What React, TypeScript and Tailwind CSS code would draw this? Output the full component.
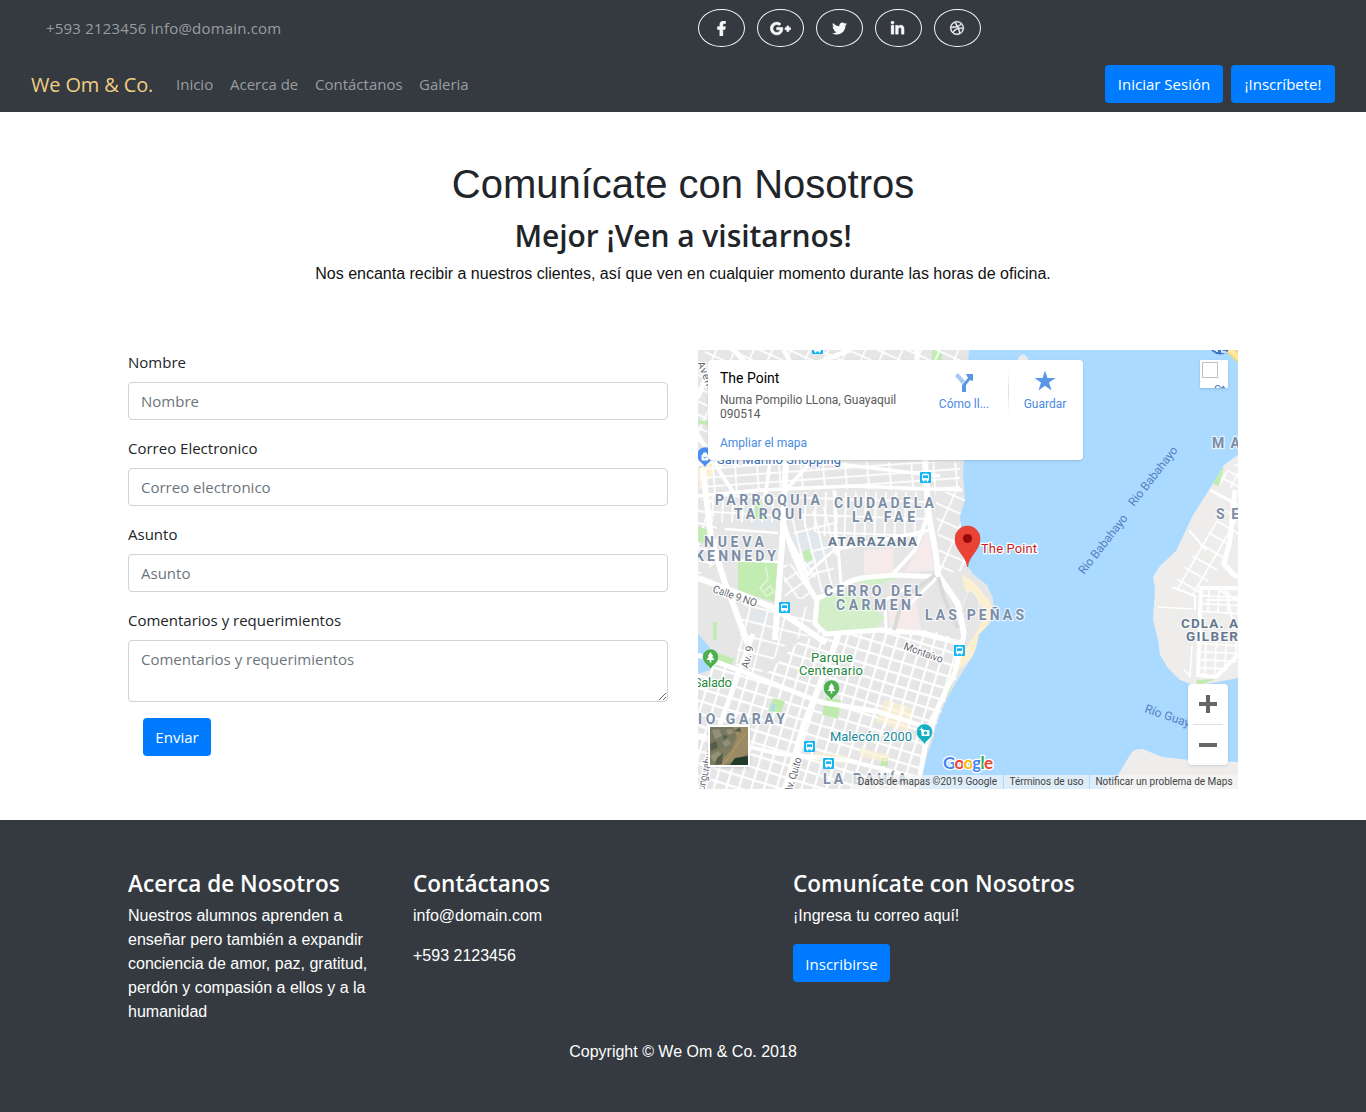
import React from "react";
import { FaFacebookF, FaGooglePlusG, FaTwitter, FaLinkedinIn, FaDribbble } from "react-icons/fa";

const navLinks = [
  { label: "Inicio", w: "w-[38px]" },
  { label: "Acerca de", w: "w-[69px]" },
  { label: "Contáctanos", w: "w-[88px]" },
  { label: "Galeria", w: "w-[49px]" },
];

const socials = [
  { name: "Facebook", icon: <FaFacebookF size={15} stroke="currentColor" strokeWidth={20} /> },
  { name: "Google Plus", icon: <FaGooglePlusG size={21} stroke="currentColor" strokeWidth={22} /> },
  { name: "Twitter", icon: <FaTwitter size={15} /> },
  { name: "LinkedIn", icon: <FaLinkedinIn size={15} stroke="currentColor" strokeWidth={14} className="mt-px -ml-px" /> },
  { name: "Dribbble", icon: <FaDribbble size={14} stroke="currentColor" strokeWidth={14} className="overflow-visible" /> },
];

const ui = "font-['Open_Sans',sans-serif]";

function Button({ children, className }: { children: React.ReactNode; className: string }) {
  return (
    <button
      className={`flex h-[38px] shrink-0 items-center justify-center whitespace-nowrap rounded bg-[#007bff] pt-px font-['Open_Sans',sans-serif] text-[15px] text-white ${className}`}
    >
      {children}
    </button>
  );
}

function Header() {
  return (
    <header className={`h-28 bg-[#343a40] text-[#9a9da0] ${ui}`}>
      <div className="flex h-14 items-center text-[15px]">
        <p className="w-[698px] pl-[46px] tracking-[0.19px]">+593 2123456 info@domain.com</p>
        <div className="flex gap-[12.5px]">
          {socials.map((s) => (
            <a
              key={s.name}
              aria-label={s.name}
              className="flex h-[38px] w-[46.5px] items-center justify-center rounded-[50%] border border-[#f8f9fa] text-[#f8f9fa]"
            >
              {s.icon}
            </a>
          ))}
        </div>
      </div>
      <nav className="flex h-14 items-center px-[31px]">
        <a className="w-[130px] pt-[2px] text-[20px] leading-6 tracking-[-0.15px] whitespace-nowrap text-[#f0cd82]">We Om &amp; Co.</a>
        <div className="ml-[15px] flex gap-4 text-[15px]">
          {navLinks.map((l) => (
            <a key={l.label} className={`whitespace-nowrap ${l.w}`}>
              {l.label}
            </a>
          ))}
        </div>
        <div className="ml-auto flex gap-2">
          <Button className="w-[118px]">Iniciar Sesión</Button>
          <Button className="w-[104px]">¡Inscríbete!</Button>
        </div>
      </nav>
    </header>
  );
}

function Field({ label, placeholder }: { label: string; placeholder: string }) {
  return (
    <label className="mb-4 block">
      <span className="mb-2 block h-6 leading-6">{label}</span>
      <input
        placeholder={placeholder}
        className="block h-[38px] w-full rounded border border-[#ced4da] px-3 pb-px placeholder:text-[#6c757d]"
      />
    </label>
  );
}

const WEST =
  "M698 350H969L968 362L965 440L963 475L965 500L960 516L963 548L968 567L973 574L987 585L993 598L994 610L990 624L979 634L976 648L972 657L965 668L955 684L945 702L935 728L934 736L928 752L922 776L918 789H698Z";
const EAST =
  "M1238 455L1224 465L1215 480L1207 493L1193 515L1176 551L1160 566L1153 577L1155 588L1153 620L1158 640L1160 655L1168 668L1180 680L1196 686L1238 678Z";

type Grid = { id: string; w: number; h: number; a: number; area: string; s?: number };
const grids: Grid[] = [
  { id: "g1", w: 12, h: 12, a: 17, s: 4.4, area: "M698 655L760 680L800 640L840 632L930 630L960 640L955 690L930 740L915 789H698Z" },
  { id: "g2", w: 22, h: 9, a: -4, area: "M700 462H960V492L820 488L700 496Z" },
  { id: "g3", w: 10, h: 17, a: 3, area: "M705 495H785V522H710Z" },
  { id: "g4", w: 10, h: 17, a: 2, area: "M800 492H925V535L850 548L800 525Z" },
  { id: "g5", w: 11, h: 22, a: -14, area: "M790 520L840 500L832 590L810 595Z" },
  { id: "g6", w: 17, h: 12, a: 15, area: "M698 500L712 498L722 560L698 575Z" },
  { id: "g7", w: 13, h: 12, a: -35, area: "M783 565L818 560L812 600L785 598Z" },
  { id: "g8", w: 18, h: 14, a: 24, area: "M935 492H966V570L940 575Z" },
  { id: "g9", w: 17, h: 12, a: 24, area: "M698 362L706 350H960V360L800 362L720 470L698 445Z" },
  { id: "g10", w: 18, h: 15, a: 14, area: "M745 600L815 608L840 630L790 640L760 675L735 670Z" },
  { id: "g11", w: 11, h: 9, a: 28, area: "M1240 460L1222 475L1218 485L1240 490Z" },
  { id: "g12", w: 16, h: 14, a: 30, area: "M1224 510L1192 556L1172 588L1195 598L1225 560L1240 530V515Z" },
  { id: "g13", w: 10, h: 8, a: 3, area: "M1200 586H1238V615L1200 612ZM1198 640H1238V660L1218 678H1197Z" },
];

const roads: [string, number][] = [
  ["M698 496L760 490L850 486L962 490", 3.5],
  ["M703 470L711 538L724 580L748 644", 6],
  ["M786 460L784 500L783 530L778 600L775 640", 6],
  ["M784 525C794 560 805 583 817 600L815 624L826 634L880 630L920 633L963 644", 5],
  ["M698 578L740 594L776 609L800 625L826 643", 6],
  ["M817 598C835 594 845 578 870 577L893 575L938 577", 5],
  ["M925 460L928 510L936 555L938 575L958 604L964 635", 6],
  ["M928 515L915 550L893 574", 4],
  ["M785 531L808 575", 4],
  ["M808 573L834 550L930 530", 3],
  ["M838 546L841 584M834 490L837 555", 3],
  ["M698 655L744 672L820 702L880 712L934 730", 5],
  ["M698 735L780 754L845 760L920 778", 4],
  ["M785 789L804 724L830 659L839 633", 6],
  ["M704 789L718 730L746 653L753 634", 5],
  ["M964 635L955 672L928 728L918 789", 5],
  ["M808 465L786 490M770 462L765 498M820 462L940 476", 3.5],
  ["M698 435L722 475L735 495M698 464L720 460", 4],
  ["M784 350L790 362M850 350L820 362M917 350V362M734 350L745 362", 5],
  ["M698 398L708 375", 4],
  ["M910 586L885 600L886 630M938 577L910 604", 3],
  ["M725 529L778 533M732 560L780 562", 2.5],
];

const eastRoads: [string, number][] = [
  ["M1235 490L1230 540L1224 564L1233 574L1238 577", 5],
  ["M1238 588L1201 588L1198 675L1216 677L1238 655", 4],
  ["M1172 587L1195 596L1195 610M1189 530L1206 550", 2],
  ["M1158 607L1193 609M1184 670L1190 676L1192 645", 1.5],
  ["M1215 588L1238 600M1225 588L1235 630M1206 600H1238", 2],
  ["M1210 490L1238 505", 3],
];

type Lbl = [string, number, number, number];
const districts: Lbl[] = [
  ["PARROQUIA", 715, 505, 105],
  ["TARQUI", 734, 519, 68],
  ["CIUDADELA", 834, 508, 100],
  ["LA FAE", 852, 522, 63],
  ["NUEVA", 704, 547, 60],
  ["KENNEDY", 695, 561, 81],
  ["CERRO DEL", 824, 596, 98],
  ["CARMEN", 836, 610, 75],
  ["LAS PEÑAS", 925, 620, 99],
  ["IO GARAY", 698, 724, 87],
  ["LA BAHÍA", 823, 784, 84],
  ["MA", 1212, 448, 28],
  ["SE", 1216, 519, 23],
];
const darkDistricts: Lbl[] = [
  ["ATARAZANA", 828, 546, 89],
  ["CDLA. A", 1181, 628, 57],
  ["GILBER", 1186, 641, 52],
];

const busStops = [
  [817, 348],
  [925, 477],
  [784, 607],
  [959, 650],
  [809, 746],
  [828, 763],
];

function Pin({ x, y, color, children }: { x: number; y: number; color: string; children?: React.ReactNode }) {
  return (
    <g transform={`translate(${x} ${y})`}>
      <path d="M0 11C-1 6-8 5-8-2A8 8 0 0 1 8-2C8 5 1 6 0 11Z" fill={color} stroke="#fff" strokeWidth=".4" />
      {children}
    </g>
  );
}

const tree = <path d="M0-7L-3-2.5H-1.5L-4 1H-.8V3.500H.8V1H4L1.5-2.5H3Z" fill="#fff" />;

function MapDrawing() {
  return (
    <svg viewBox="698 350 540 439" width="540" height="439" className="block font-[Roboto,sans-serif]">
      <defs>
        <clipPath id="west">
          <path d={WEST} />
        </clipPath>
        <clipPath id="east">
          <path d={EAST} />
        </clipPath>
        {grids.map((g) => (
          <pattern key={g.id} id={g.id} width={g.w} height={g.h} patternUnits="userSpaceOnUse" patternTransform={`rotate(${g.a} 698 350)`}>
            <path d={`M0 0H${g.w}M0 0V${g.h}`} stroke="#fff" strokeWidth={g.s ?? 3.4} />
          </pattern>
        ))}
      </defs>
      <rect x="698" y="350" width="540" height="439" fill="#aadaff" />
      <path d="M1017 361C1021 352 1025 352 1029 361Z" fill="#ebebeb" />
      <path d={WEST} fill="#e6e6e6" />
      <path d={EAST} fill="#eeedec" />
      <path d="M1104 789L1118 775L1130 755Q1133 748 1143 749L1162 757L1190 760L1238 762V789Z" fill="#eeedec" />
      <g clipPath="url(#west)">
        <path d="M786 540L812 527L830 549L806 572ZM750 520L778 520V532L750 528ZM749 612H765V625H752Z" fill="#e2e7ec" />
        <path d="M713 622H717V640H713ZM932 350H942V361H932Z" fill="#c3ecb2" />
        <path d="M962 575L974 582L990 602L994 612L978 640L975 655L955 673L958 660L978 630L986 610L965 590ZM698 470L708 462L716 470L700 490Z" fill="#fdf0d0" />
        {grids
          .filter((g) => !["g11", "g12", "g13"].includes(g.id))
          .map((g) => (
            <path key={g.id} d={g.area} fill={`url(#${g.id})`} />
          ))}
        <path d="M698 634L712 650L706 655L710 670L698 674Z" fill="#aadaff" />
        <path d="M864 550L893 548V572L864 574ZM928 528L934 570L905 572L920 545ZM888 602L914 592L922 634L890 630Z" fill="#f7eaeb" />
        <path d="M817 603C830 592 842 596 850 590L885 618L872 632H826L816 620ZM850 580L910 574L875 586Z" fill="#d3efca" />
        <path d="M738 560L778 562L774 602L738 590ZM698 526L707 530V544L698 542ZM802 552L809 549L813 559L806 562ZM755 503L762 501L765 520L755 518Z" fill="#c3ecb2" />
        <path d="M718 653L734 659L730 669L715 662ZM826 697L841 700L838 719L822 715ZM773 698L785 701L781 713L768 711ZM881 758H888V766H881ZM955 668L951 690L943 700L948 680Z" fill="#c0eaae" />
        <path d="M773 703L775 705L774 711H770Z" fill="#aadaff" />
        <path d="M885 700L912 708L907 732L876 722ZM815 752L850 757L848 764L813 761ZM860 748L890 755L887 762L860 757Z" fill="#fdf0d0" opacity=".65" />
        <path d="M880 714L910 722M893 702L884 728M904 706L896 730" stroke="#fff" strokeWidth="2" />
        {roads.map(([d, w]) => (
          <path key={d} d={d} fill="none" stroke="#fff" strokeWidth={w} strokeLinejoin="round" />
        ))}
        <path d="M938 577L944 598L958 628M935 575L915 590L903 598L894 630" fill="none" stroke="#dadada" strokeWidth="4" />
        <path d="M766 567L768 579L760 588L767 596L774 592L770 586L764 592" fill="none" stroke="#e1f4da" strokeWidth="1.5" />
        <path d="M969 590Q980 595 979 610Q973 624 966 625L962 610Z" fill="#e2e2e2" stroke="#f2f2f2" />
        <path d="M698 422L712 424" stroke="#c3ecb2" strokeWidth="4" />
      </g>
      <g clipPath="url(#east)">
        {grids
          .filter((g) => ["g11", "g12", "g13"].includes(g.id))
          .map((g) => (
            <path key={g.id} d={g.area} fill={`url(#${g.id})`} />
          ))}
        <path d="M1218 467L1224 468L1219 486L1213 484ZM1196 680L1216 679L1198 686Z" fill="#c3ecb2" />
        {eastRoads.map(([d, w]) => (
          <path key={d} d={d} fill="none" stroke="#fff" strokeWidth={w} />
        ))}
      </g>
      <path d="M1226 346L1242 361" stroke="#f7d774" strokeWidth="8" />
      <path d="M1226 346L1242 361" stroke="#ffe9a0" strokeWidth="5" />
      <circle cx="1220" cy="344" r="10.5" fill="#3b79c8" />
      <path d="M1214 350H1217V352M1222 350V352H1226" stroke="#fff" strokeWidth="1.5" fill="none" />

      <g fontWeight="700" fontSize="14" stroke="#fff" strokeWidth="2.5" strokeOpacity=".7" strokeLinejoin="round" paintOrder="stroke" fill="#7c8ea6">
        {districts.map(([t, x, y, w]) => (
          <text key={t} x={x} y={y} textLength={w}>
            {t}
          </text>
        ))}
        <g fill="#66788f" fontSize="13.5">
          {darkDistricts.map(([t, x, y, w]) => (
            <text key={t} x={x} y={y} textLength={w}>
              {t}
            </text>
          ))}
        </g>
      </g>
      <g fontSize="10.5" stroke="#fff" strokeWidth="2.5" paintOrder="stroke" fill="#5f6670">
        <text transform="translate(712 592) rotate(19)" textLength="46">Calle 9 NO</text>
        <text transform="translate(903 649) rotate(20)" textLength="41">Montalvo</text>
        <text transform="translate(748 669) rotate(-76)" textLength="23">Av. 9</text>
        <text transform="translate(791 794) rotate(-73)" textLength="37">Av. Quito</text>
        <text transform="translate(703 796) rotate(-77)" textLength="48">Tungurahua</text>
        <text transform="translate(697 363) rotate(68)" textLength="42">Avenida</text>
      </g>
      <g fontSize="12" fill="#5580c4">
        <text transform="translate(1084 575) rotate(-52)" textLength="72">Rio Babahayo</text>
        <text transform="translate(1134 507) rotate(-52)" textLength="72">Rio Babahayo</text>
        <text transform="translate(1144 712) rotate(19)" textLength="60">Río Guayas</text>
      </g>
      <g fontSize="13" stroke="#fff" strokeWidth="2.5" paintOrder="stroke">
        <text x="717" y="464" textLength="124" fill="#3d70b8">San Marino Shopping</text>
        <g fill="#24873a">
          <text x="811" y="662" textLength="42">Parque</text>
          <text x="799" y="675" textLength="64">Centenario</text>
          <text x="694" y="687" textLength="38">Salado</text>
        </g>
        <text x="830" y="741" textLength="82" fill="#16879a">Malecón 2000</text>
        <text x="981" y="553" textLength="56" fill="#c5221f">The Point</text>
      </g>
      {busStops.map(([x, y]) => (
        <g key={`${x}-${y}`} transform={`translate(${x + 0.5} ${y + 0.5})`}>
          <rect x="-5.5" y="-5.5" width="11" height="11" rx="1" fill="#12b5f5" />
          <path d="M-3.5-2.5Q-3.5-4 0-4T3.5-2.5V3H2.5V4.200H1.3V3H-1.3V4.200H-2.5V3H-3.500Z" fill="#fff" />
          <path d="M-2.5-2.200H2.500V.5H-2.500Z" fill="#12b5f5" />
        </g>
      ))}
      <Pin x={710.5} y={659} color="#4caf50">{tree}</Pin>
      <Pin x={831.5} y={690} color="#4caf50">{tree}</Pin>
      <Pin x={924.5} y={734} color="#12b0c0">
        <rect x="-3" y="-4" width="8" height="6" rx="1" fill="#fff" />
        <circle cx="1" cy="-1" r="1.7" fill="#12b0c0" />
        <path d="M-5-4.500H-1M-3-6.500V-2.500" stroke="#fff" />
      </Pin>
      <Pin x={705} y={457} color="#4b8df0">
        <path d="M-3-2H3V3H-3ZM-1.500-2V-4H1.500V-2" fill="#fff" stroke="#fff" />
        <path d="M-1.500 0Q0 2 1.500 0" fill="none" stroke="#4b8df0" />
      </Pin>
      <path d="M967.500 567C966 555 955 551 955 538.5A12.500 12.500 0 0 1 980 538.500C980 551 969 555 967.500 567Z" fill="#ea4335" stroke="#d23a2d" strokeWidth=".6" />
      <circle cx="967.500" cy="538.500" r="4.600" fill="#960a0a" />
      <text x="943" y="769" fontSize="17" fontWeight="700" textLength="50" stroke="#fff" strokeWidth="2.5" paintOrder="stroke" className="font-[Lato,sans-serif]">
        <tspan fill="#4285f4">G</tspan>
        <tspan fill="#ea4335">o</tspan>
        <tspan fill="#fbbc05">o</tspan>
        <tspan fill="#4285f4">g</tspan>
        <tspan fill="#34a853">l</tspan>
        <tspan fill="#ea4335">e</tspan>
      </text>
    </svg>
  );
}

function SatelliteThumb() {
  return (
    <svg viewBox="0 0 38 38" className="absolute top-[375px] left-[10px] box-content h-[38px] w-[38px] border-2 border-white shadow">
      <rect width="38" height="38" fill="#7e7b61" />
      <path d="M22 0H38V26L25 34L12 38H8L22 22L27 10Z" fill="#9b8a63" />
      <path d="M0 0H23L26 8L18 21L12 20L0 27Z" fill="#77785f" />
      <path d="M2 3L9 2L12 9L5 12ZM12 15L18 12L21 17L15 20ZM0 29L8 24L13 29L4 35ZM16 3L22 2L24 6L18 8Z" fill="#939078" />
      <path d="M0 17L6 14L8 20L1 24ZM13 8L18 9L14 13ZM7 31L13 26L12 37L5 38ZM24 4L30 0L31 5Z" fill="#555d46" />
      <path d="M37 5L28 16L20 29L13 38" fill="none" stroke="#b19c70" />
      <path d="M20 38L25 31L38 29V38Z" fill="#213d29" />
    </svg>
  );
}

function MapPanel() {
  return (
    <div className="relative h-[439px] w-[540px] overflow-hidden font-[Roboto,sans-serif]">
      <MapDrawing />
      <div className="absolute top-[10px] left-[10px] flex h-[100px] w-[375px] rounded-sm bg-white pt-[9px] pl-3 text-[12px] shadow">
        <div className="w-[208px] shrink-0">
          <p className="text-[14px] leading-[18px] text-black">The Point</p>
          <p className="mt-[6px] w-[190px] leading-[14px] text-[#5b5b5b]">Numa Pompilio LLona, Guayaquil 090514</p>
          <p className="mt-[15px] leading-[14px] text-[#4a8ae2]">Ampliar el mapa</p>
        </div>
        <div className="flex w-[80px] shrink-0 flex-col items-center pr-[8px] text-[#4a8ae2]">
          <svg viewBox="0 0 22 22" className="mt-[3px] h-[22px] w-[22px]">
            <path d="M2 4L5 1L12 9L9 12Z" fill="#a9c9f5" />
            <path d="M9 20V13L15 6L13 2H20V9L17 8L13 13V20Z" fill="#5996e4" />
          </svg>
          <span className="mt-[3px] leading-[14px]">Cómo ll...</span>
        </div>
        <div className="mt-[1px] h-[44px] w-px bg-gradient-to-b from-white via-[#ddd] to-white" />
        <div className="flex w-[72px] shrink-0 flex-col items-center text-[#4a8ae2]">
          <svg viewBox="0 0 22 22" className="mt-[1px] h-[22px] w-[22px]">
            <path d="M11 .5L13.500 8H21.500L15 12.600L17.500 20.500L11 15.700L4.500 20.500L7 12.600L.5 8H8.500Z" fill="#5996e4" />
          </svg>
          <span className="mt-[5px] leading-[14px]">Guardar</span>
        </div>
      </div>
      <div className="absolute top-[10px] left-[502px] h-7 w-7 overflow-hidden rounded-[1px] bg-white p-[2px] shadow">
        <div className="h-4 w-4 border border-[#c0c0c0]" />
        <p className="mt-[5px] pl-[12px] text-[12px] leading-[14px] text-[#4a7fce]">St</p>
      </div>
      <SatelliteThumb />
      <div className="absolute top-[334px] left-[490px] flex h-[81px] w-10 flex-col items-center rounded-sm bg-white shadow">
        <svg viewBox="0 0 18 18" className="mt-[11px] h-[18px] w-[18px]">
          <path d="M9 0V18M0 9H18" stroke="#666" strokeWidth="4" />
        </svg>
        <div className="mt-[11px] h-px w-[30px] bg-[#e0e0e0]" />
        <div className="mt-[18px] h-1 w-[18px] bg-[#666]" />
      </div>
      <div className="absolute right-0 bottom-0 flex h-[14px] text-[10px] leading-[14px] whitespace-nowrap text-[#444]">
        <span className="w-[151px] bg-[#f5f5f5]/70 pr-[6px] text-right">Datos de mapas ©2019 Google</span>
        <span className="ml-px w-[85px] bg-[#f5f5f5]/70 text-center">Términos de uso</span>
        <span className="ml-px w-[148px] bg-[#f5f5f5]/70 text-center">Notificar un problema de Maps</span>
      </div>
    </div>
  );
}

function FooterTitle({ children }: { children: React.ReactNode }) {
  return <h5 className="mb-[6px] font-['Open_Sans',sans-serif] text-[22.5px] leading-[29px] font-semibold tracking-[0.05px] whitespace-nowrap">{children}</h5>;
}

export default function App() {
  return (
    <div className="w-[1366px] bg-white font-['Liberation_Sans',sans-serif] text-base text-[#212529]">
      <Header />
      <main className="h-[708px]">
        <section className="pt-12 text-center">
          <h1 className="text-[40px] leading-[48px]">Comunícate con Nosotros</h1>
          <h2 className={`mt-[9px] text-[30px] leading-[38px] font-semibold tracking-[-0.05px] ${ui}`}>Mejor ¡Ven a visitarnos!</h2>
          <p className="mt-[7px] leading-6 text-[#111]">Nos encanta recibir a nuestros clientes, así que ven en cualquier momento durante las horas de oficina.</p>
        </section>
        <section className="mx-auto mt-[64px] flex w-[1110px] gap-[30px]">
          <form className={`w-[540px] text-[15px] ${ui}`}>
            <Field label="Nombre" placeholder="Nombre" />
            <Field label="Correo Electronico" placeholder="Correo electronico" />
            <Field label="Asunto" placeholder="Asunto" />
            <label className="block">
              <span className="mb-2 block h-6 leading-6">Comentarios y requerimientos</span>
              <textarea
                placeholder="Comentarios y requerimientos"
                className="block h-[62px] w-full rounded border border-[#ced4da] px-3 py-[6px] leading-6 placeholder:text-[#6c757d]"
              />
            </label>
            <Button className="mt-4 ml-[15px] w-[68px]">Enviar</Button>
          </form>
          <MapPanel />
        </section>
      </main>
      <footer className="h-[292px] bg-[#343a40] pt-[49px] text-white">
        <div className="mx-auto flex w-[1110px] leading-6">
          <div className="w-[285px]">
            <FooterTitle>Acerca de Nosotros</FooterTitle>
            <p className="w-[255px]">Nuestros alumnos aprenden a enseñar pero también a expandir conciencia de amor, paz, gratitud, perdón y compasión a ellos y a la humanidad</p>
          </div>
          <div className="w-[380px]">
            <FooterTitle>Contáctanos</FooterTitle>
            <p>info@domain.com</p>
            <p className="mt-4">+593 2123456</p>
          </div>
          <div>
            <FooterTitle>Comunícate con Nosotros</FooterTitle>
            <p className="mb-4">¡Ingresa tu correo aquí!</p>
            <Button className="w-[97px]">Inscribirse</Button>
          </div>
        </div>
        <p className="mt-4 text-center leading-6">Copyright © We Om &amp; Co. 2018</p>
      </footer>
    </div>
  );
}
